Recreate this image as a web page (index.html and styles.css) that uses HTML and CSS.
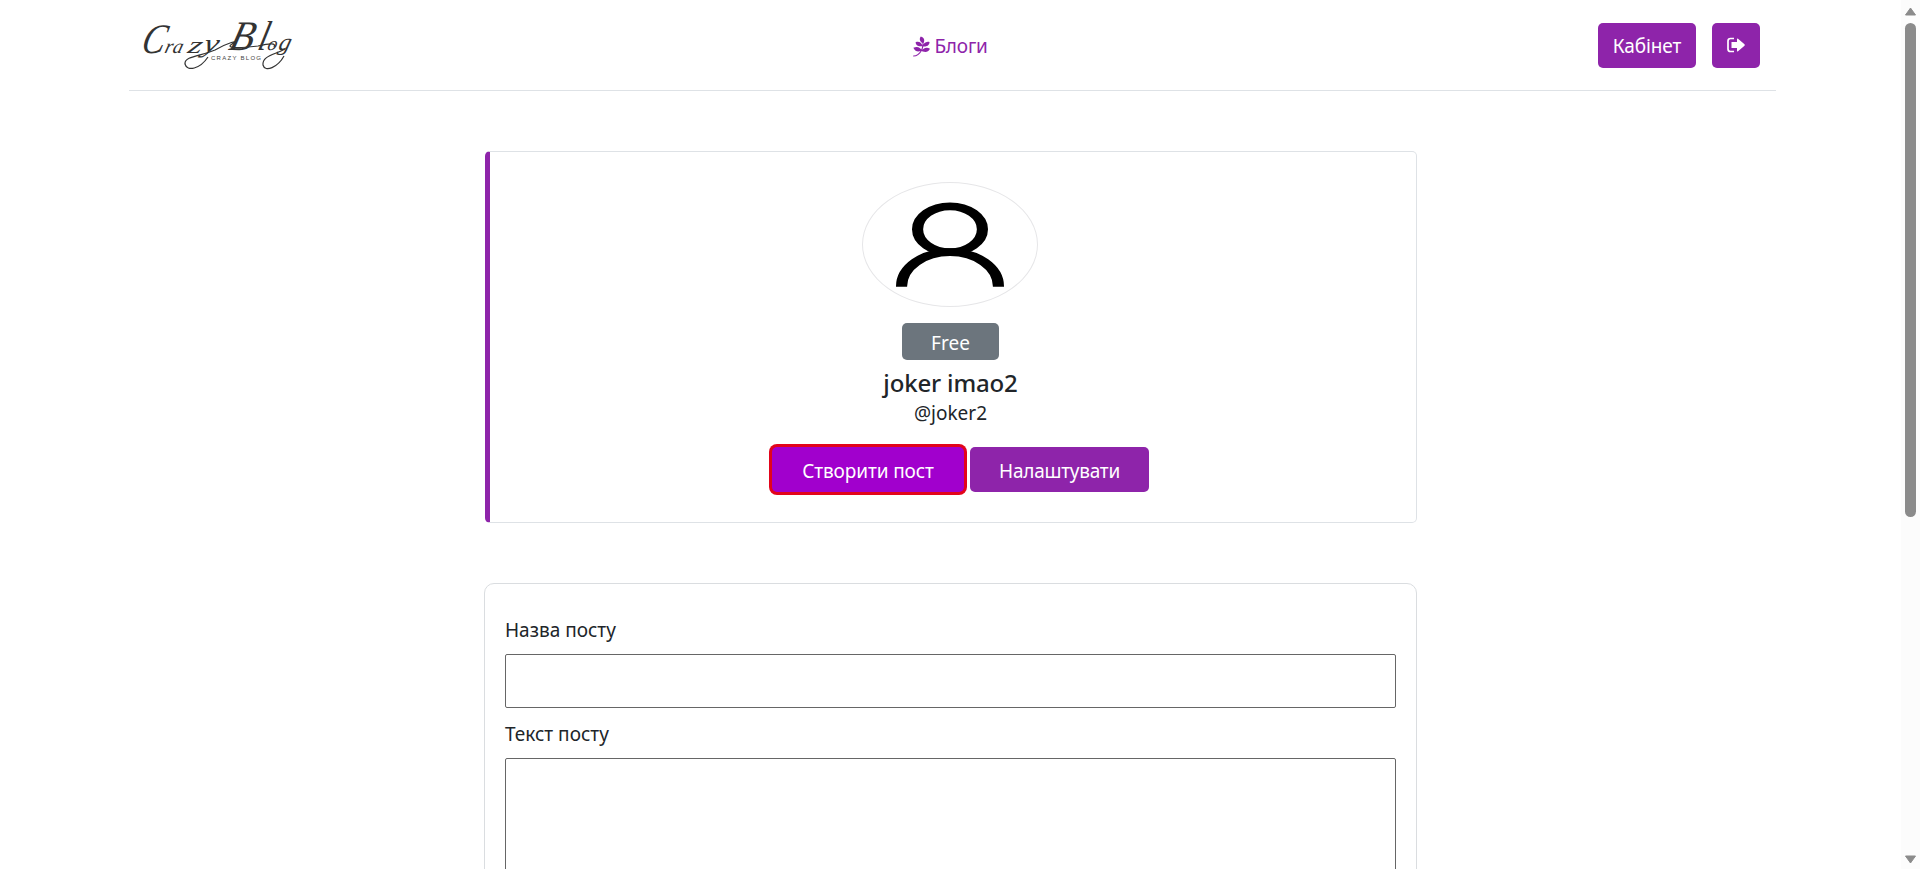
FILE: index.html
```html
<!DOCTYPE html>
<html lang="uk">
<head>
<meta charset="utf-8">
<title>CrazyBlog</title>
<link rel="stylesheet" href="styles.css">
</head>
<body>
<div class="page">
  <header class="header">
    <a class="logo">
      <svg width="160" height="64" viewBox="136 12 160 64">
        <g class="logo-script" transform="translate(11 0) skewX(-15)">
          <text x="143" y="53" font-size="42" textLength="23" lengthAdjust="spacingAndGlyphs">C</text>
          <text x="167" y="53" font-size="20">r</text>
          <text x="175" y="53" font-size="20">a</text>
          <text x="190" y="53" font-size="24" textLength="14" lengthAdjust="spacingAndGlyphs">z</text>
          <text x="205" y="52" font-size="26" textLength="15" lengthAdjust="spacingAndGlyphs">y</text>
          <text x="230" y="50" font-size="42" textLength="24" lengthAdjust="spacingAndGlyphs">B</text>
          <text x="259" y="50" font-size="42" textLength="9" lengthAdjust="spacingAndGlyphs">l</text>
          <text x="269" y="50" font-size="19">o</text>
          <text x="280" y="50" font-size="24">g</text>
        </g>
        <g class="logo-swash">
          <path d="M208 57C200 69 187 72 185 64C184 56 202 56 215 50C227 43 241 39 232 44C224 49 243 48 258 46C271 43 276 43 274 47"/>
          <path d="M284 56C278 67 265 73 263 65C262 56 274 55 285 49"/>
        </g>
        <text class="logo-sub" x="211" y="60" textLength="50">CRAZY BLOG</text>
      </svg>
    </a>
    <a class="nav-link">
      <svg class="leaf" width="17" height="21" viewBox="0 0 384 512" preserveAspectRatio="none"><path fill="currentColor" d="M384 312.7c-55.1 136.7-187.1 54-187.1 54-40.5 81.8-107.4 134.4-184.6 134.7-16.1 0-16.6-24.4 0-24.4 64.4-.3 120.5-42.7 157.2-110.1-41.1 15.9-118.6 27.9-161.6-82.2 109-44.9 159.1 11.2 178.3 45.5 9.9-24.4 17-50.9 21.6-79.7 0 0-139.7 21.9-149.5-98.1 119.1-47.9 152.6 76.7 152.6 76.7 1.6-16.7 3.3-52.6 3.3-53.4 0 0-106.3-73.7-38.1-165.2 124.6 43 61.4 162.4 61.4 162.4.5 1.6.5 23.8 0 33.4 0 0 45.2-89 136.4-57.5-4.2 134-141.9 106.4-141.9 106.4-4.4 27.4-11.2 53.4-20 77.5 0 0 83-91.8 172-20z"/></svg>
      <span class="nav-text">Блоги</span>
    </a>
    <div class="actions">
      <a class="btn btn-cabinet"><span>Кабінет</span></a>
      <a class="btn btn-exit">
        <svg width="20" height="18" viewBox="0 0 20 18"><path d="M8 2.500H4.500Q2 2.500 2 5V13Q2 15.500 4.500 15.500H8" fill="none" stroke="#fff" stroke-width="1.700"/><path d="M5.500 6H11V3.200Q11 1.800 12 2.800L18.500 8.300Q19.100 9 18.500 9.700L12 15.200Q11 16.200 11 14.800V12H5.500Z" fill="#fff"/></svg>
      </a>
    </div>
  </header>
  <main class="content">
    <section class="profile">
      <svg class="avatar" width="176" height="125" viewBox="0 0 125 125" preserveAspectRatio="none">
        <g fill="none" stroke="#000" stroke-width="8"><circle cx="62.500" cy="47" r="23.300"/><path d="M27.700 105.500V105A34.800 34.800 0 0 1 97.300 105V105.500"/></g>
      </svg>
      <span class="badge"><span>Free</span></span>
      <h1 class="name"><span>joker imao2</span></h1>
      <p class="handle"><span>@joker2</span></p>
      <div class="buttons">
        <a class="btn btn-create"><span>Створити пост</span></a>
        <a class="btn btn-settings"><span>Налаштувати</span></a>
      </div>
    </section>
    <form class="post-form">
      <label class="label label-title" for="title">Назва посту</label>
      <input class="field" id="title" type="text">
      <label class="label label-text" for="text">Текст посту</label>
      <textarea class="field area" id="text"></textarea>
    </form>
  </main>
</div>
<div class="scrollbar">
  <svg width="13" height="9" viewBox="0 0 13 9"><path d="M6.500 1L11.500 8H1.500Z" fill="#8b8b8b" stroke="#8b8b8b" stroke-linejoin="round"/></svg>
  <div class="thumb"></div>
  <svg class="down" width="13" height="9" viewBox="0 0 13 9"><path d="M6.500 8L11.500 1H1.500Z" fill="#8b8b8b" stroke="#8b8b8b" stroke-linejoin="round"/></svg>
</div>
</body>
</html>
```
FILE: styles.css
```css
* { box-sizing: border-box; }
body {
  margin: 0;
  height: 869px;
  display: flex;
  overflow: hidden;
  background: #fff;
  color: #212529;
  font: 19px/30px "Noto Sans", "Open Sans", sans-serif;
  letter-spacing: 0;
}
.page { width: 1901px; height: 869px; overflow: hidden; }
.header {
  width: 1647px;
  height: 91px;
  margin: 0 0 0 129px;
  padding: 0 16px 0 7px;
  display: grid;
  grid-template-columns: 1fr auto 1fr;
  align-items: center;
  border-bottom: 1px solid #dee2e6;
}
.logo { display: flex; height: 66px; }
.logo svg { overflow: visible; }
.logo-script { font-family: "Liberation Serif", serif; font-style: italic; fill: #333; letter-spacing: 0; }
.logo-swash { fill: none; stroke: #333; stroke-width: 1.2; }
.logo-sub { font: 6px "Liberation Sans", sans-serif; fill: #444; }
.nav-link { display: flex; align-items: center; gap: 4px; margin: 2px 0 0 5px; color: #8e24aa; letter-spacing: -0.2px; }
.actions { display: flex; justify-content: flex-end; gap: 16px; }
.btn {
  display: flex;
  align-items: center;
  justify-content: center;
  height: 45px;
  padding-top: 2px;
  border-radius: 5px;
  background: #8e24aa;
  color: #fff;
  letter-spacing: -0.1px;
}
.btn-cabinet { width: 98px; }
.btn-exit { width: 48px; padding-top: 0; }
.content { width: 932px; margin: 60px 0 0 485px; }
.profile {
  height: 372px;
  padding-top: 30px;
  display: flex;
  flex-direction: column;
  align-items: center;
  border: 1px solid #dee2e6;
  border-left: 5px solid #8e24aa;
  border-radius: 5px;
}
.avatar { flex: none; margin-right: 6px; border: 1px solid #e6e6e8; border-radius: 50%; }
.badge {
  width: 97px;
  height: 37px;
  margin: 16px 5px 0 0;
  padding-top: 2px;
  display: flex;
  align-items: center;
  justify-content: center;
  border-radius: 5px;
  background: #6c757d;
  color: #fff;
}
.name { margin: 8px 5px 0 0; font-size: 24px; font-weight: 500; line-height: 30px; letter-spacing: -0.15px; }
.handle { margin: 0 5px 0 0; }
.buttons { display: flex; gap: 6px; margin: 19px -15px 0 0; }
.btn-create { width: 192px; background: #a100cd; box-shadow: 0 0 0 3px #e2041b; }
.btn-settings { width: 179px; letter-spacing: -0.25px; }
.post-form {
  height: 400px;
  margin: 60px 0 0 -1px;
  padding: 31px 20px 0;
  border: 1px solid #dadde0;
  border-radius: 10px;
}
.label { display: block; height: 39px; }
.label-text { margin-top: 11px; }
.field {
  display: block;
  width: 100%;
  height: 54px;
  border: 1px solid #666;
  border-radius: 2px;
  background: #fff;
}
.area { height: 300px; resize: none; }
.scrollbar {
  width: 19px;
  height: 869px;
  padding: 7px 0 5px;
  display: flex;
  flex-direction: column;
  align-items: center;
  background: #fcfcfc;
}
.thumb { width: 11px; height: 494px; margin-top: 7px; border-radius: 6px; background: #8b8b8b; }
.down { margin-top: auto; }
```
